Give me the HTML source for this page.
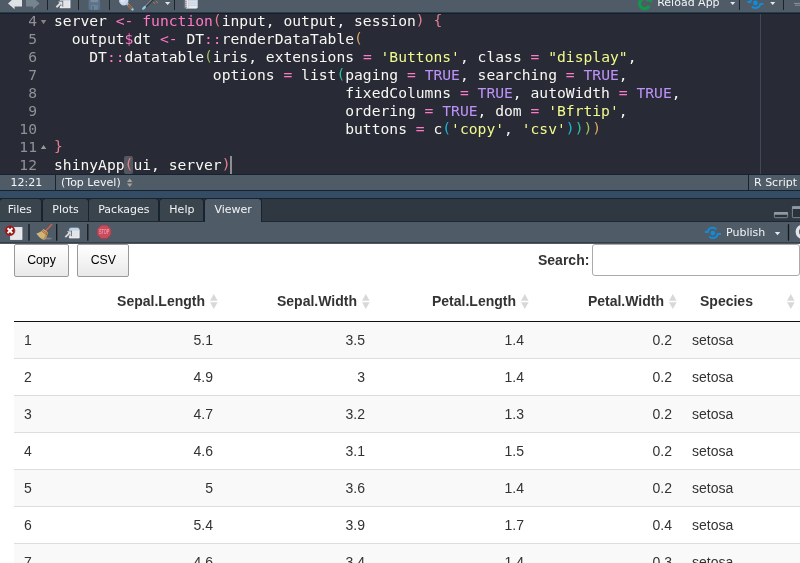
<!DOCTYPE html>
<html>
<head>
<meta charset="utf-8">
<title>RStudio</title>
<style>
html,body{margin:0;padding:0;}
body{width:800px;height:563px;overflow:hidden;position:relative;background:#fff;font-family:"DejaVu Sans","Liberation Sans",sans-serif;}
.abs{position:absolute;}
svg{position:absolute;overflow:visible;}
#tb1{left:0;top:0;width:800px;height:12px;background:#4f5c68;overflow:hidden;}
#tb1b{left:0;top:12px;width:800px;height:1px;background:#2c3b49;z-index:5;border-bottom:1px solid #10202f;}
.sep{position:absolute;width:1px;background:#1c2329;}
.sepl{position:absolute;width:1px;background:#62707c;}
.tbt{position:absolute;color:#f2f4f5;font-size:11px;line-height:13px;white-space:nowrap;}
#editor{left:0;top:13px;width:800px;height:161px;background:#282a36;overflow:hidden;}
#margin{left:760px;top:0;width:1px;height:161px;background:#44475a;}
.ln{position:absolute;left:0;width:37px;text-align:right;color:#909194;font:14.667px/18px "DejaVu Sans Mono","Liberation Mono",monospace;height:18px;white-space:pre;}
.cl{position:absolute;left:54px;color:#f8f8f2;font:14.667px/18px "DejaVu Sans Mono","Liberation Mono",monospace;height:18px;white-space:pre;}
.k{color:#ff79c6}.s{color:#f1fa8c}.c{color:#bd93f9}
.p0,.p1,.p2,.p3,.p4{position:relative;top:-1px}
.p0{color:#e27e8d}.p1{color:#d9a362}.p2{color:#a2bf5a}.p3{color:#2fbf9f}.p4{color:#1eb4d4}
.fold{position:absolute;left:40px;width:0;height:0;border-left:3.5px solid transparent;border-right:3.5px solid transparent;}
#status{left:0;top:174px;width:800px;height:17px;background:#4f5c68;border-top:1px solid #15222f;border-bottom:1px solid #15222f;box-sizing:border-box;}
#band{left:0;top:191px;width:800px;height:7px;background:#344c64;}
#tabs{left:0;top:198px;width:800px;height:24px;background:#2f3841;border-top:1px solid #17232f;border-bottom:1px solid #1c2935;box-sizing:border-box;z-index:3;}
.tab{position:absolute;top:-1px;height:23px;background:#3a444d;color:#f2f4f5;font-size:11px;line-height:21px;text-align:center;border-radius:4px 4px 0 0;border:1px solid #17232f;border-bottom:none;box-sizing:border-box;}
.tab.act{background:#4f5c68;height:24px;}
#tb2{left:0;top:221px;width:800px;height:21px;background:#4f5c68;border-bottom:1px solid #323f4c;}
#tb2b{left:0;top:243px;width:800px;height:1px;background:#505963;z-index:4;}
#viewer{left:0;top:243.6px;width:800px;height:320px;background:#fff;overflow:hidden;font-family:"Liberation Sans",sans-serif;color:#333;font-size:14px;line-height:20px;}
.btn{position:absolute;top:0.4px;height:33px;box-sizing:border-box;border:1px solid #999;border-radius:2px;background:linear-gradient(to bottom,#fff 0%,#e9e9e9 100%);color:#000;font-size:12.32px;line-height:30.6px;text-align:center;}
#slabel{position:absolute;left:538px;top:6.5px;font-weight:bold;color:#333;line-height:20px;}
#sinput{position:absolute;left:592px;top:0.6px;width:208px;height:31.5px;box-sizing:border-box;border:1px solid #aaa;border-radius:3px;background:#fff;}
table{position:absolute;left:14px;top:37px;border-collapse:separate;border-spacing:0;table-layout:fixed;width:786px;}
th{height:20px;padding:10px 18px;border-bottom:1px solid #111;font-weight:bold;text-align:right;position:relative;white-space:nowrap;}
td{height:20px;padding:8px 10px;border-top:1px solid #ddd;text-align:right;white-space:nowrap;}
tr:first-child td{border-top:none;}
tbody tr:nth-child(odd) td{background:#f9f9f9;}
th.l,td.l{text-align:left;}
.so{position:absolute;right:5.8px;top:13.8px;width:7.6px;height:15.2px;}
</style>
</head>
<body>
<div id="wrap" class="abs" style="left:0;top:0;width:800px;height:563px;will-change:transform;">
<div id="tb1" class="abs">
<svg width="800" height="12" viewBox="0 0 800 12" style="left:0;top:0">
<!-- back / forward arrows -->
<polygon points="8,3.4 14.6,-2.4 14.6,-1 22,-1 22,6.6 14.6,6.6 14.6,9.3" fill="#dfe2e5"/>
<polygon points="39.6,3.4 33,-2.4 33,-1 26,-1 26,6.6 33,6.6 33,9.3" fill="#76848f"/>
<!-- show in new window -->
<rect x="60.2" y="-2" width="9.8" height="9.8" fill="#e4e4e6" stroke="#fafafa" stroke-width="0.8"/>
<rect x="60.2" y="-1" width="9.8" height="1.8" fill="#b9d3ea"/>
<path d="M56.4 7.3 L61 2.8" stroke="#4a5661" stroke-width="3.4" fill="none"/>
<polygon points="57,0.8 63.2,0.8 63.2,7" fill="#4a5661"/>
<path d="M56.4 7.3 L61 2.8" stroke="#dadde0" stroke-width="2" fill="none"/>
<polygon points="57.9,1.5 62.5,1.5 62.5,6.1" fill="#dadde0"/>
<!-- save (disabled) -->
<rect x="88.6" y="-3" width="11.4" height="12.8" rx="0.8" fill="#5b738d"/>
<rect x="90.6" y="-3" width="7.4" height="5.2" fill="#7d8c99"/>
<rect x="91" y="5" width="6.6" height="4.8" fill="#6f8397"/>
<rect x="92" y="6" width="2" height="3.8" fill="#566d86"/>
<!-- magnifier -->
<circle cx="123.8" cy="0.8" r="4.2" fill="#ccd6ee" stroke="#e4e9f4" stroke-width="0.8"/>
<circle cx="122.8" cy="0" r="2.2" fill="#dfe6f6"/>
<path d="M127.4 4.2 L132.5 9.3" stroke="#9ec9e0" stroke-width="2.5" stroke-linecap="round"/>
<path d="M128 4.8 L131.9 8.7" stroke="#97582a" stroke-width="2.3"/>
<!-- wand -->
<path d="M143.5 8.5 L152.8 -0.8" stroke="#33383d" stroke-width="2.7" stroke-linecap="round"/>
<path d="M144.2 7 L152 -0.8" stroke="#868a8e" stroke-width="1.1"/>
<path d="M143.3 8.7 L144.8 7.2" stroke="#8ec4e6" stroke-width="2.6" stroke-linecap="round"/>
<path d="M153.6 2.2 L154.8 3.6 M156.2 1.2 L157.6 2.8" stroke="#dc8442" stroke-width="1.0"/>
<polygon points="165,2 170.3,2 167.65,5" fill="#e1e5e8"/>
<!-- notebook -->
<rect x="185.4" y="-2" width="11.9" height="10.2" rx="0.8" fill="#e6ebf2" stroke="#f4f6f8" stroke-width="0.6"/>
<path d="M188.6 0.8 H197 M188.6 3 H197 M188.6 5.2 H197" stroke="#b4c6dc" stroke-width="0.9"/>
<path d="M188.4 -2 V8" stroke="#e3a9a0" stroke-width="0.5"/>
<path d="M183.8 -0.2 H186.8 M183.8 1.8 H186.8 M183.8 3.8 H186.8 M183.8 5.8 H186.8 M183.8 7.6 H186.8" stroke="#737c84" stroke-width="1"/>
<!-- reload -->
<path d="M648.8 0.6 A5.1 5.1 0 1 0 649.2 6.0" stroke="#10994a" stroke-width="3.1" fill="none"/>
<polygon points="646,-0.6 651.8,-3 651.8,3" fill="#10994a"/>
<polygon points="730.2,2 735.2,2 732.7,5" fill="#e6e9eb"/>
<!-- publish -->
<circle cx="755.5" cy="3" r="2.4" fill="#128bd8"/>
<path d="M747.5 1.95 H750.3 A5 5 0 0 1 755.5 -2" stroke="#128bd8" stroke-width="1.9" fill="none"/>
<path d="M751.96 6.49 A5 5 0 0 0 760.45 3.9 H763.6" stroke="#128bd8" stroke-width="1.9" fill="none"/>
<polygon points="770.2,2 775.2,2 772.7,5" fill="#e6e9eb"/>
<path d="M794 3.4 H800 M795 5.2 H800" stroke="#8c98a2" stroke-width="0.9"/>
</svg>
<div class="sep" style="left:47px;top:0;height:10px"></div>
<div class="sep" style="left:78px;top:0;height:10px"></div>
<div class="sep" style="left:109px;top:0;height:10px"></div>
<div class="sep" style="left:174px;top:0;height:10px"></div>
<div class="sep" style="left:739px;top:0;height:10px"></div>
<div class="sep" style="left:783px;top:0;height:10px"></div>
<div class="tbt" style="left:657.2px;top:-4.4px">Reload App</div>
</div>
<div id="tb1b" class="abs"></div>
<div id="editor" class="abs">
<div id="margin" class="abs"></div>
<svg width="10" height="161" viewBox="0 0 10 161" style="left:38px;top:0"><polygon points="2.8,7.1 8.3,7.1 5.55,11.2" fill="#85827f"/><polygon points="2.8,136.1 8.3,136.1 5.55,132" fill="#9a9a98"/></svg>
<div class="ln" style="top:-1px">4</div><div class="cl" style="top:-1px">server <span class="k">&lt;-</span> <span class="k">function</span><span class="p0">(</span>input, output, session<span class="p0">)</span> <span class="p0">{</span></div>
<div class="ln" style="top:17px">5</div><div class="cl" style="top:17px">  output<span class="k">$</span>dt <span class="k">&lt;-</span> DT<span class="k">::</span>renderDataTable<span class="p1">(</span></div>
<div class="ln" style="top:35px">6</div><div class="cl" style="top:35px">    DT<span class="k">::</span>datatable<span class="p2">(</span>iris, extensions <span class="k">=</span> <span class="s">'Buttons'</span>, class <span class="k">=</span> <span class="s">"display"</span>,</div>
<div class="ln" style="top:53px">7</div><div class="cl" style="top:53px">                  options <span class="k">=</span> list<span class="p3">(</span>paging <span class="k">=</span> <span class="c">TRUE</span>, searching <span class="k">=</span> <span class="c">TRUE</span>,</div>
<div class="ln" style="top:71px">8</div><div class="cl" style="top:71px">                                 fixedColumns <span class="k">=</span> <span class="c">TRUE</span>, autoWidth <span class="k">=</span> <span class="c">TRUE</span>,</div>
<div class="ln" style="top:89px">9</div><div class="cl" style="top:89px">                                 ordering <span class="k">=</span> <span class="c">TRUE</span>, dom <span class="k">=</span> <span class="s">'Bfrtip'</span>,</div>
<div class="ln" style="top:107px">10</div><div class="cl" style="top:107px">                                 buttons <span class="k">=</span> c<span class="p4">(</span><span class="s">'copy'</span>, <span class="s">'csv'</span><span class="p4">)</span><span class="p3">)</span><span class="p2">)</span><span class="p1">)</span></div>
<div class="ln" style="top:125px">11</div><div class="cl" style="top:125px"><span class="p0">}</span></div>
<div class="abs" style="left:124.2px;top:143px;width:8.7px;height:18px;background:#55575f;border-radius:2px"></div>
<div class="ln" style="top:143px">12</div><div class="cl" style="top:143px">shinyApp<span class="p0">(</span>ui, server<span class="p0">)</span></div>
<div class="abs" style="left:230.3px;top:142.5px;width:1.3px;height:18px;background:#8d8e94"></div>
</div>
<div id="status" class="abs">
<div class="tbt" style="left:10.5px;top:1px">12:21</div>
<div class="sep" style="left:55px;top:0;height:15px;background:#17232f"></div>
<div class="tbt" style="left:61px;top:1px">(Top Level)</div>
<svg width="8" height="10" viewBox="0 0 8 10" style="left:126px;top:3px"><polygon points="1,4 6.4,4 3.7,0.6" fill="#a7a298"/><polygon points="1,5.6 6.4,5.6 3.7,9" fill="#a7a298"/></svg>
<div class="sep" style="left:748px;top:0;height:15px;background:#17232f"></div>
<div class="tbt" style="left:754px;top:1px">R Script</div>
</div>
<div id="band" class="abs"></div>
<div id="tabs" class="abs">
<div class="tab" style="left:-1px;width:43.4px;padding-right:2px">Files</div>
<div class="tab" style="left:42.4px;width:46.2px">Plots</div>
<div class="tab" style="left:88.4px;width:71px">Packages</div>
<div class="tab" style="left:159.4px;width:45px">Help</div>
<div class="tab act" style="left:204.4px;width:57.4px">Viewer</div>
<svg width="30" height="14" viewBox="0 0 30 14" style="left:773px;top:7px">
<rect x="1.4" y="6.5" width="13.2" height="5.2" rx="0.8" fill="#2a333b" stroke="#8f99a2" stroke-width="0.8"/>
<rect x="1" y="6.1" width="14" height="2.7" rx="0.8" fill="#8f99a2"/>
<rect x="19.4" y="0.65" width="12" height="11" rx="0.8" fill="#2a333b" stroke="#8f99a2" stroke-width="0.8"/>
<rect x="19" y="0.25" width="13" height="2.8" rx="0.8" fill="#8f99a2"/>
</svg>
</div>
<div id="tb2" class="abs">
<svg width="800" height="22" viewBox="0 0 800 22" style="left:0;top:0">
<!-- remove -->
<rect x="10.5" y="6.4" width="11.5" height="12.1" fill="#e6e6e8" stroke="#f6f6f6" stroke-width="0.7"/>
<circle cx="10" cy="9.7" r="4.9" fill="#96181a" stroke="#a52224" stroke-width="0.7"/>
<path d="M7.6 7.3 L12.4 12.1 M12.4 7.3 L7.6 12.1" stroke="#fff" stroke-width="2"/>
<!-- broom -->
<ellipse cx="46.4" cy="17.6" rx="5.6" ry="1" fill="#9aa3ab" opacity="0.55"/>
<path d="M45.8 9.8 L51.7 3.5" stroke="#d2614c" stroke-width="1.5" stroke-linecap="round"/>
<path d="M43.6 8 L47.8 11.2 C47.6 14 46.4 17 44.2 18.8 C41 18 38 15.6 36.4 12.6 C39.4 11.6 41.8 10 43.6 8 Z" fill="#d1b574"/>
<path d="M44.2 18.8 C46.4 17 47.6 14 47.8 11.2 L46.2 10 C45.8 13.6 44.6 16.6 42.6 18.2 Z" fill="#b99552"/>
<path d="M42.7 9 L47.4 12.6 M41.7 10 L47 14" stroke="#a8513a" stroke-width="0.8"/>
<!-- popout -->
<path d="M69.3 9.2 V17 H79.2 V9.2 Z" fill="#e4e4e6" stroke="#f8f8f8" stroke-width="0.7"/>
<path d="M69.3 9.4 V8.6 A1.8 1.8 0 0 1 71.1 6.9 H77.4 A1.8 1.8 0 0 1 79.2 8.6 V9.4 Z" fill="#b8d3ea" stroke="#cfe0f0" stroke-width="0.5"/>
<path d="M65.3 16.1 L70 11.5" stroke="#4a5661" stroke-width="3.4" fill="none"/>
<polygon points="66,9.7 72,9.7 72,15.6" fill="#4a5661"/>
<path d="M65.3 16.1 L69.8 11.7" stroke="#d6d9dc" stroke-width="2" fill="none"/>
<polygon points="66.8,10.3 71.3,10.3 71.3,14.8" fill="#d6d9dc"/>
<!-- stop -->
<polygon points="101.3,4.2 106.9,4.2 110.9,8.1 110.9,13.7 106.9,17.6 101.3,17.6 97.4,13.7 97.4,8.1" fill="#cb4a5c" stroke="#a83b4b" stroke-width="0.7"/>
<text x="99" y="13.3" font-family="'Liberation Sans',sans-serif" font-size="6.6" fill="#f0bcc5" textLength="10.4" lengthAdjust="spacingAndGlyphs">STOP</text>
<!-- publish -->
<circle cx="712.9" cy="12.05" r="2.4" fill="#128bd8"/>
<path d="M704.9 11 H707.7 A5 5 0 0 1 716.44 8.46" stroke="#128bd8" stroke-width="1.9" fill="none"/>
<path d="M709.36 15.54 A5 5 0 0 0 717.85 12.95 H721" stroke="#128bd8" stroke-width="1.9" fill="none"/>
<polygon points="774.8,10.9 780.2,10.9 777.5,14.2" fill="#e6e9eb"/>
<circle cx="803" cy="10.85" r="5.7" fill="none" stroke="#e2e5e9" stroke-width="3.4"/>
<path d="M29 3.4 V19.2 M56.7 3.4 V19.2 M87.8 3.4 V19.2 M788.5 3.6 V19.2" stroke="#12171c" stroke-width="1.3" stroke-linecap="round"/>
</svg>
<div class="tbt" style="left:726px;top:4.5px">Publish</div>
</div>
<div id="tb2b" class="abs"></div>
<div id="viewer" class="abs">
<div class="btn" style="left:14px;width:55px">Copy</div>
<div class="btn" style="left:77.4px;width:51.8px">CSV</div>
<div id="slabel">Search:</div>
<div id="sinput"></div>
<table>
<colgroup><col style="width:85px"><col style="width:124px"><col style="width:152px"><col style="width:159px"><col style="width:148px"><col style="width:118px"></colgroup>
<thead><tr><th></th><th>Sepal.Length<svg class="so" viewBox="0 0 7.6 15.2"><polygon points="0,6.8 7.6,6.8 3.8,0" fill="#d8d8d8"/><polygon points="0,8.3 7.6,8.3 3.8,15.1" fill="#d8d8d8"/></svg></th><th>Sepal.Width<svg class="so" viewBox="0 0 7.6 15.2"><polygon points="0,6.8 7.6,6.8 3.8,0" fill="#d8d8d8"/><polygon points="0,8.3 7.6,8.3 3.8,15.1" fill="#d8d8d8"/></svg></th><th>Petal.Length<svg class="so" viewBox="0 0 7.6 15.2"><polygon points="0,6.8 7.6,6.8 3.8,0" fill="#d8d8d8"/><polygon points="0,8.3 7.6,8.3 3.8,15.1" fill="#d8d8d8"/></svg></th><th>Petal.Width<svg class="so" viewBox="0 0 7.6 15.2"><polygon points="0,6.8 7.6,6.8 3.8,0" fill="#d8d8d8"/><polygon points="0,8.3 7.6,8.3 3.8,15.1" fill="#d8d8d8"/></svg></th><th class="l">Species<svg class="so" viewBox="0 0 7.6 15.2"><polygon points="0,6.8 7.6,6.8 3.8,0" fill="#d8d8d8"/><polygon points="0,8.3 7.6,8.3 3.8,15.1" fill="#d8d8d8"/></svg></th></tr></thead>
<tbody>
<tr><td class="l">1</td><td>5.1</td><td>3.5</td><td>1.4</td><td>0.2</td><td class="l">setosa</td></tr>
<tr><td class="l">2</td><td>4.9</td><td>3</td><td>1.4</td><td>0.2</td><td class="l">setosa</td></tr>
<tr><td class="l">3</td><td>4.7</td><td>3.2</td><td>1.3</td><td>0.2</td><td class="l">setosa</td></tr>
<tr><td class="l">4</td><td>4.6</td><td>3.1</td><td>1.5</td><td>0.2</td><td class="l">setosa</td></tr>
<tr><td class="l">5</td><td>5</td><td>3.6</td><td>1.4</td><td>0.2</td><td class="l">setosa</td></tr>
<tr><td class="l">6</td><td>5.4</td><td>3.9</td><td>1.7</td><td>0.4</td><td class="l">setosa</td></tr>
<tr><td class="l">7</td><td>4.6</td><td>3.4</td><td>1.4</td><td>0.3</td><td class="l">setosa</td></tr>
<tr><td class="l">8</td><td>5</td><td>3.4</td><td>1.5</td><td>0.2</td><td class="l">setosa</td></tr>
</tbody>
</table>
</div>
</div>
</body>
</html>
